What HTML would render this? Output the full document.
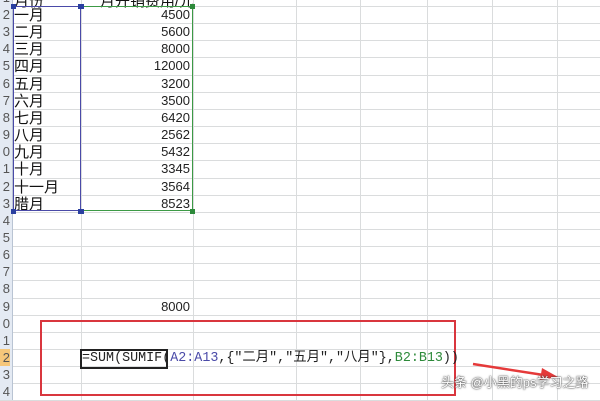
<!DOCTYPE html>
<html><head><meta charset="utf-8"><style>
body{margin:0;width:600px;height:400px;overflow:hidden;background:#fff;position:relative;font-family:"Liberation Sans","Noto Sans CJK SC",sans-serif}
.a{position:absolute}
.hl{position:absolute;left:0;width:600px;height:1px;background:#dadcdd}
.vl{position:absolute;top:0;height:400px;width:1px;background:#dadcdd}
.rh{position:absolute;left:0;width:12px;background:#e4eaf3;border-right:1px solid #b9c4d3;height:400px;top:0;overflow:hidden}
.rn{position:absolute;left:-7px;width:17px;text-align:right;font-size:13px;color:#555}
.m{position:absolute;left:14px;font-size:15px;color:#111}
.n{position:absolute;left:100px;width:90px;text-align:right;font-size:13px;color:#222}
</style></head><body>
<div id="g"></div>
<div class="rh" id="rh"></div>
<div class="vl" style="left:81px"></div>
<div class="vl" style="left:193px"></div>
<div class="vl" style="left:296px"></div>
<div class="vl" style="left:360px"></div>
<div class="vl" style="left:427px"></div>
<div class="vl" style="left:492px"></div>
<div class="vl" style="left:557px"></div>
<script>
var h='',hh='';var names=['一月','二月','三月','四月','五月','六月','七月','八月','九月','十月','十一月','腊月'];
var nums=['4500','5600','8000','12000','3200','3500','6420','2562','5432','3345','3564','8523'];
for(var r=1;r<=24;r++){var t=6+17.15*(r-2);h+='<div class="hl" style="top:'+Math.round(t+17.15)+'px"></div>';
var bg=r==22?'background:#f6c77a;':'';
hh+='<div class="rn" style="top:'+Math.round(t)+'px;height:17px;line-height:17px;'+bg+'">'+(r%10)+'</div>';
if(r>=2&&r<=13){h+='<div class="m" style="top:'+Math.round(t-2)+'px">'+names[r-2]+'</div><div class="n" style="top:'+Math.round(t+1)+'px">'+nums[r-2]+'</div>';}}
h+='<div class="m" style="top:-10px">月份</div><div class="a" style="left:100px;top:-10px;font-size:15px;color:#111">月开销费用/元</div>';
h+='<div class="n" style="top:'+Math.round(6+17.15*17+1)+'px">8000</div>';
document.getElementById('g').innerHTML=h;document.getElementById('rh').innerHTML=hh;
</script>
<div class="a" style="left:13px;top:6px;width:68px;height:205px;border:1px solid #4a4aa8;box-sizing:border-box"></div>
<div class="a" style="left:80px;top:6px;width:113px;height:205px;border:1px solid #3c9a45;border-left:none;box-sizing:border-box"></div>
<div class="a" style="left:11px;top:4px;width:5px;height:5px;background:#2a3fa0"></div>
<div class="a" style="left:78px;top:4px;width:6px;height:5px;background:#2a3fa0"></div>
<div class="a" style="left:11px;top:209px;width:5px;height:5px;background:#2a3fa0"></div>
<div class="a" style="left:78px;top:209px;width:6px;height:5px;background:#2a3fa0"></div>
<div class="a" style="left:190px;top:4px;width:5px;height:5px;background:#2d8a3a"></div>
<div class="a" style="left:190px;top:209px;width:5px;height:5px;background:#2d8a3a"></div>
<div class="a" style="left:40px;top:320px;width:416px;height:76px;border:2px solid #d9363e;box-sizing:border-box"></div>
<div class="a" style="left:80px;top:349px;width:88px;height:20px;border:2px solid #222;border-right:none;box-sizing:border-box"></div>
<div class="a" style="left:166px;top:349px;width:2px;height:20px;background:#222"></div>
<div class="a" style="left:82px;top:349px;font-family:'Liberation Mono','Noto Sans CJK SC',monospace;font-size:13.5px;line-height:20px;color:#222;white-space:nowrap;transform:scaleX(0.99);transform-origin:left">=SUM(SUMIF(<span style="color:#4a4aa8">A2:A13</span>,{"二月","五月","八月"},<span style="color:#2d8a3a">B2:B13</span>))</div>
<svg class="a" style="left:470px;top:360px" width="100" height="25"><path d="M3 4 L80 16" stroke="#e53a3a" stroke-width="2.5"/><path d="M72 8 L88 17 L70 20 Z" fill="#e53a3a"/></svg>
<div class="a" style="left:441px;top:372px;font-size:13px;color:#fff;text-shadow:0 0 2px #444,0 0 1px #333;white-space:nowrap">头条 @小黑的ps学习之路</div>
</body></html>
